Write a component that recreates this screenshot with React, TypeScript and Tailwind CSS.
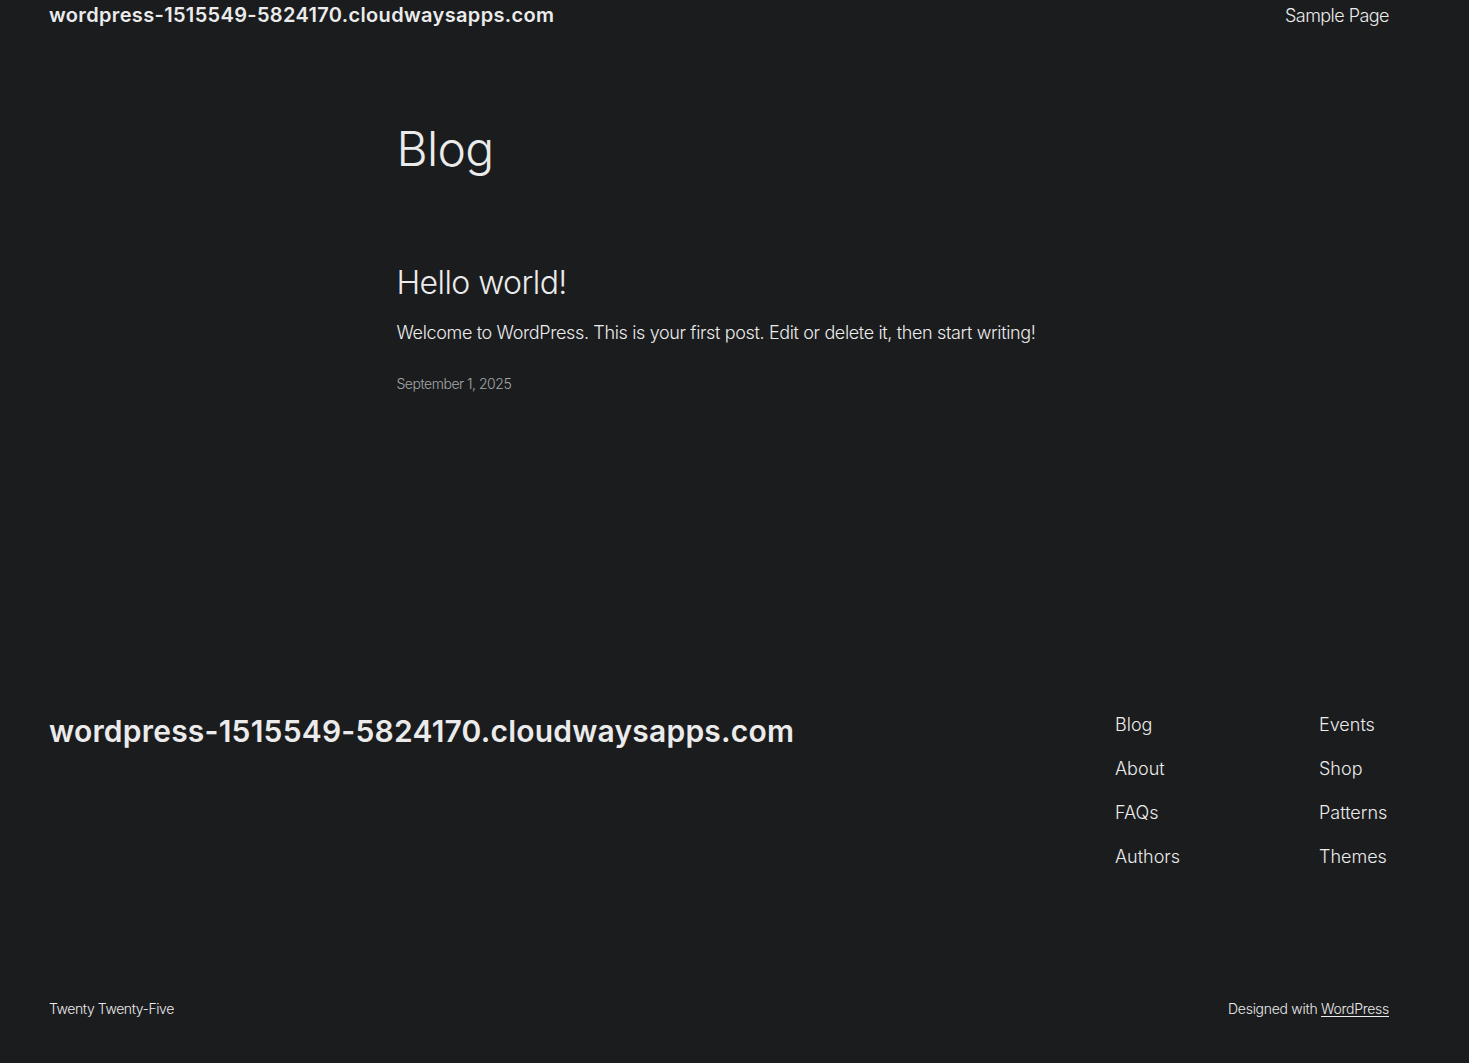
const links1 = ['Blog', 'About', 'FAQs', 'Authors'];
const links2 = ['Events', 'Shop', 'Patterns', 'Themes'];

export default function App() {
  return (
    <div className="min-h-screen bg-[#1b1c1e] text-[#ebebeb] font-['Inter',sans-serif] antialiased">
      <div className="ml-[49px] w-[1340px]">
        <header className="flex items-center justify-between h-[31px]">
          <a className="text-[20px] leading-[31px] font-semibold tracking-[0.017em]">
            wordpress-1515549-5824170.cloudwaysapps.com
          </a>
          <nav>
            <a className="text-[18px] leading-[27px] font-light tracking-[-0.03em]">Sample Page</a>
          </nav>
        </header>

        <main className="w-[645px] mx-auto">
          <h1 className="mt-[91px] text-[48px] leading-[54px] font-light tracking-[-0.015em]">Blog</h1>
          <article className="mt-[88px]">
            <h2 className="text-[32px] leading-[38px] font-light tracking-[-0.018em]">Hello world!</h2>
            <p className="mt-[17px] text-[18px] leading-[27px] font-light tracking-[-0.02em]">
              Welcome to WordPress. This is your first post. Edit or delete it, then start writing!
            </p>
            <p className="mt-[28px] text-[14px] leading-[20px] font-light tracking-[-0.034em] text-[#a6a6a6]">
              September 1, 2025
            </p>
          </article>
        </main>

        <footer className="mt-[317px]">
          <div className="flex justify-between items-start">
            <a className="mt-[2px] text-[30px] leading-[36px] font-semibold tracking-[0.007em]">
              wordpress-1515549-5824170.cloudwaysapps.com
            </a>
            <div className="flex w-[274px]">
              <ul className="w-[204px] flex flex-col gap-[17px]">
                {links1.map((l) => (
                  <li key={l} className="text-[18px] leading-[27px] font-light">{l}</li>
                ))}
              </ul>
              <ul className="flex flex-col gap-[17px]">
                {links2.map((l) => (
                  <li key={l} className="text-[18px] leading-[27px] font-light">{l}</li>
                ))}
              </ul>
            </div>
          </div>
          <div className="mt-[129px] pb-[44px] flex justify-between text-[14px] leading-[20px] font-light">
            <p className="tracking-[-0.03em]">Twenty Twenty-Five</p>
            <p className="tracking-[-0.02em]">
              Designed with <a className="underline underline-offset-2">WordPress</a>
            </p>
          </div>
        </footer>
      </div>
    </div>
  );
}
